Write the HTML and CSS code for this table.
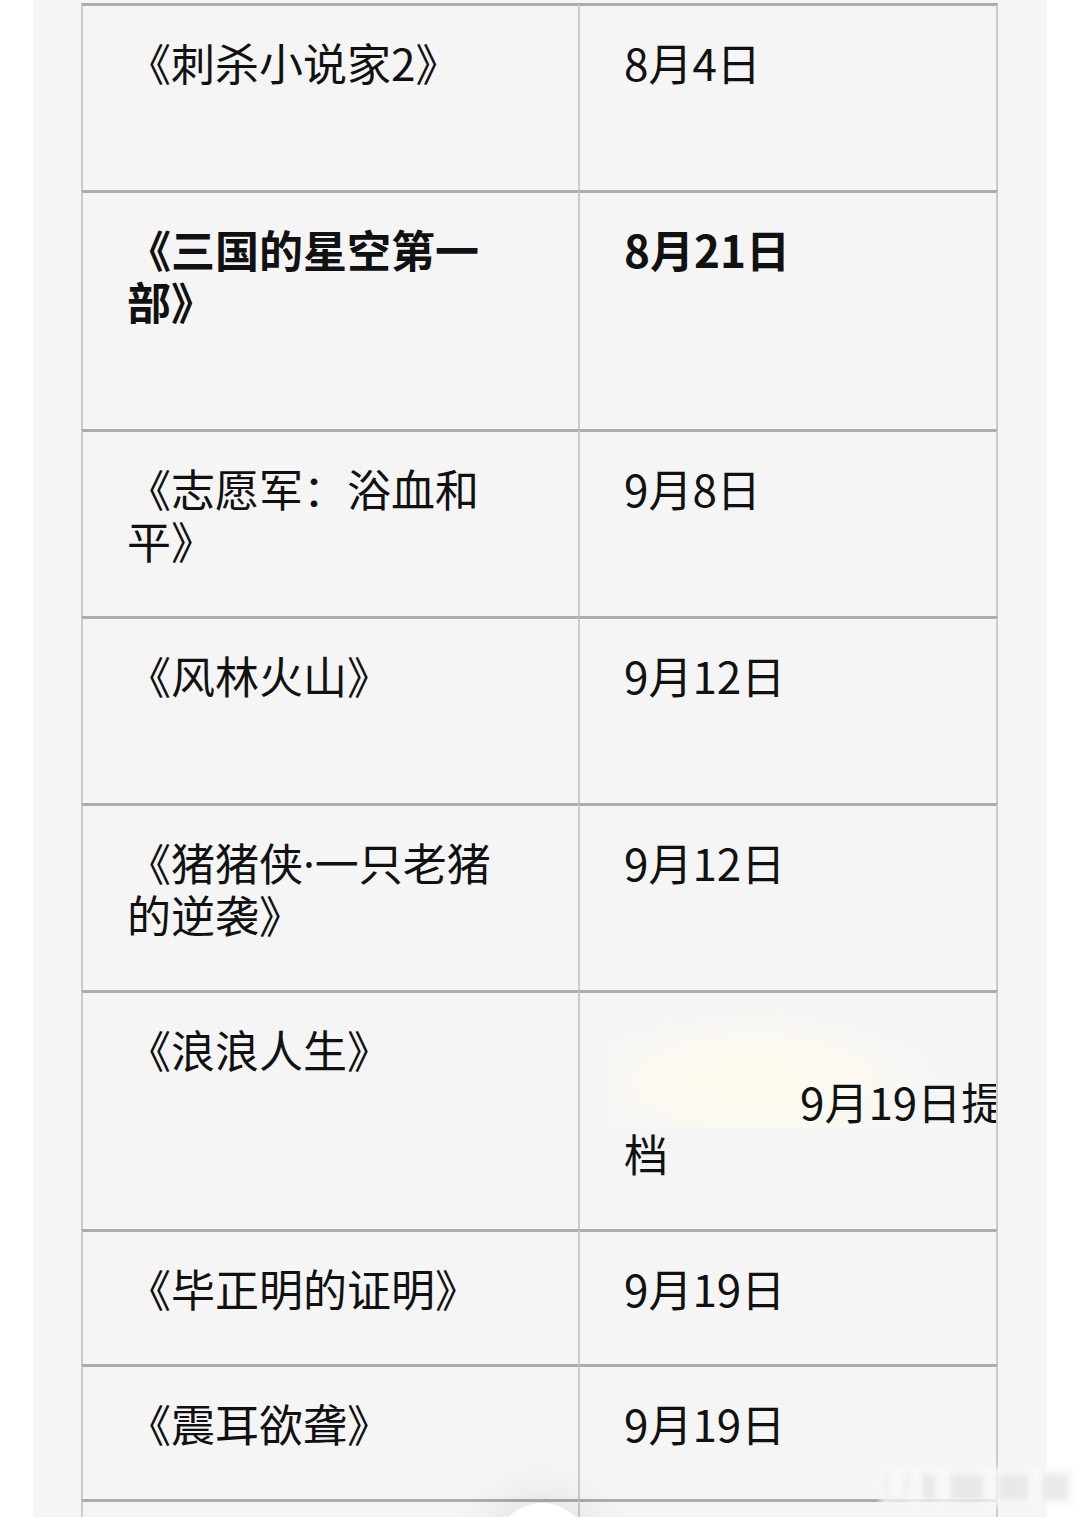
FILE: index.html
```html
<!DOCTYPE html>
<html lang="zh-CN">
<head>
<meta charset="utf-8">
<title>定档表</title>
<link rel="stylesheet" href="styles.css">
</head>
<body>
<div class="sheet">
  <div class="table">
    <div class="row">
      <div class="cell title"><div class="txt l2">《刺杀小说家2》</div></div>
      <div class="cell date"><div class="txt">8月4日</div></div>
    </div>
    <div class="row bold">
      <div class="cell title"><div class="txt l3">《三国的星空第一部》</div></div>
      <div class="cell date"><div class="txt">8月21日</div></div>
    </div>
    <div class="row">
      <div class="cell title"><div class="txt">《志愿军：浴血和平》</div></div>
      <div class="cell date"><div class="txt">9月8日</div></div>
    </div>
    <div class="row">
      <div class="cell title"><div class="txt l2">《风林火山》</div></div>
      <div class="cell date"><div class="txt">9月12日</div></div>
    </div>
    <div class="row">
      <div class="cell title"><div class="txt">《猪猪侠<span class="dot">·</span>一只老猪的逆袭》</div></div>
      <div class="cell date"><div class="txt">9月12日</div></div>
    </div>
    <div class="row">
      <div class="cell title"><div class="txt">《浪浪人生》</div></div>
      <div class="cell date odd">
        <div class="smudge"></div>
        <div class="txt l3">
          <div class="blank"></div>
          <div class="shifted">9月19日提</div>
          <div>档</div>
        </div>
      </div>
    </div>
    <div class="row">
      <div class="cell title"><div class="txt">《毕正明的证明》</div></div>
      <div class="cell date"><div class="txt">9月19日</div></div>
    </div>
    <div class="row">
      <div class="cell title"><div class="txt">《震耳欲聋》</div></div>
      <div class="cell date"><div class="txt">9月19日</div></div>
    </div>
    <div class="row">
      <div class="cell title"><div class="txt"></div></div>
      <div class="cell date"><div class="txt"></div></div>
    </div>
  </div>
</div>
<div class="fab"></div>
<div class="watermark">
  <span class="wm-pill"></span>
  <span class="wm-bar w1"></span>
  <span class="wm-bar w2"></span>
  <span class="wm-bar w3"></span>
  <span class="wm-bar w4"></span>
</div>
</body>
</html>
```

FILE: styles.css
```css
html, body {
  margin: 0;
  padding: 0;
  background: #ffffff;
}

body {
  font-family: "Noto Sans CJK SC", "Noto Sans", sans-serif;
  color: #111111;
  overflow: hidden;
}

.sheet {
  margin: 0 33px;
  background: #f5f5f5;
  padding: 3px 0 0 48px;
  min-height: 1600px;
  box-sizing: border-box;
}

.table {
  display: grid;
  grid-template-columns: 497px 420px;
  font-size: 44px;
  line-height: 52px;
}

.row {
  display: contents;
}

.cell {
  border-top: 3px solid #acacac;
  border-left: 2px solid #cbcbcb;
  padding: 30px 0 50px 44px;
  min-width: 0;
}

.title {
  padding-right: 71px;
}

.date {
  border-right: 2px solid #cbcbcb;
  padding-right: 20px;
  overflow: hidden;
}

.bold .txt {
  font-weight: 700;
}

.dot {
  font-family: "Noto Sans", "DejaVu Sans", sans-serif;
  line-height: 1;
}

.txt {
  min-height: 52px;
}

.txt.l2 {
  min-height: 104px;
}

.txt.l3 {
  min-height: 156px;
}

.odd {
  position: relative;
}

.smudge {
  position: absolute;
  left: 26px;
  top: 18px;
  width: 330px;
  height: 118px;
  background: radial-gradient(ellipse at 45% 60%, rgba(255, 250, 236, 0.95) 0%, rgba(255, 251, 240, 0.6) 45%, rgba(245, 245, 245, 0) 72%);
}

.blank {
  height: 52px;
}

.shifted {
  position: relative;
  padding-left: 176px;
  white-space: nowrap;
}

.fab {
  position: fixed;
  left: 494px;
  top: 1503px;
  width: 96px;
  height: 96px;
  border-radius: 50%;
  background: #ffffff;
  box-shadow: 0 0 40px 12px rgba(0, 0, 0, 0.07);
}

.watermark {
  position: fixed;
  left: 880px;
  top: 1468px;
  width: 196px;
  height: 38px;
  background: rgba(250, 250, 250, 0.8);
  display: flex;
  align-items: center;
  gap: 14px;
  padding-left: 6px;
  box-sizing: border-box;
  filter: blur(3px);
}

.wm-pill {
  width: 18px;
  height: 28px;
  border: 2px solid rgba(200, 200, 200, 0.6);
  border-radius: 0 0 9px 9px;
  border-top: none;
}

.wm-bar {
  height: 26px;
  background: rgba(210, 210, 210, 0.45);
}

.w1 { width: 14px; }
.w2 { width: 34px; }
.w3 { width: 30px; }
.w4 { width: 26px; }
```
